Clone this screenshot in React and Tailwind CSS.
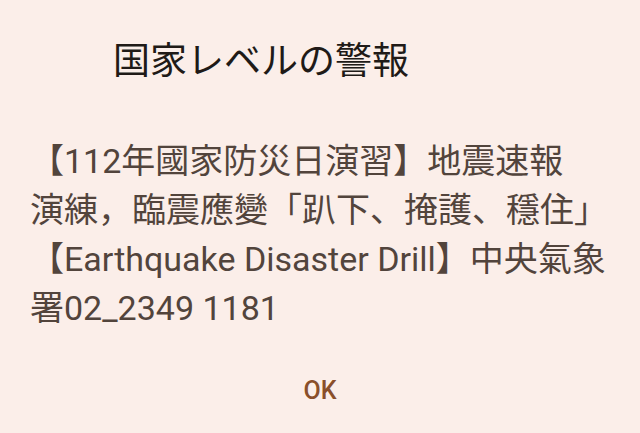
export default function App() {
  return (
    <div className="w-[640px] h-[433px] bg-[#fbeee9] font-['Roboto','Noto_Sans_CJK_JP',sans-serif] overflow-hidden">
      {/* TITLE */}
      <h2 className="pt-[40px] pl-[113px] text-[37px] leading-[44px] font-normal text-[#201a17]">
        国家レベルの警報
      </h2>

      {/* MESSAGE */}
      <p className="mt-[53px] pl-[30px] pr-[26px] text-[34px] leading-[49px] text-[#52443c]">
        【112年國家防災日演習】地震速報
        <br />
        演練，臨震應變「趴下、掩護、穩住」
        <br />
        【Earthquake Disaster Drill】中央氣象
        <br />
        署02_2349 1181
      </p>

      {/* ACTION */}
      <div className="mt-[43px] flex justify-center">
        <button className="text-[25px] leading-[29px] font-medium text-[#8a4f2a] px-4">
          OK
        </button>
      </div>
    </div>
  );
}
